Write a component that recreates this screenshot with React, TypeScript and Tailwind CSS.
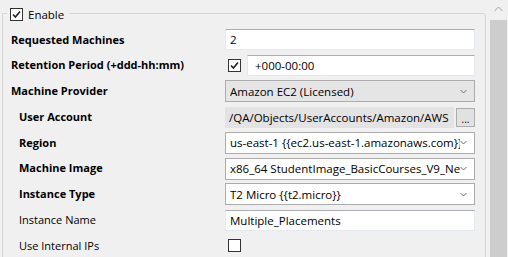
import type { ReactNode } from 'react'

// Windows-forms style property panel: "Enable" group box with labelled rows.

function Check({ checked }: { checked: boolean }) {
  return (
    <span className="flex h-[13px] w-[13px] items-center justify-center border border-[#333] bg-white">
      {checked && (
        <svg width="9" height="9" viewBox="0 0 9 9">
          <path d="M1 4.5 L3.4 7 L8 1.5" fill="none" stroke="#222" strokeWidth="1.6" />
        </svg>
      )}
    </span>
  )
}

function Chevron() {
  return (
    <svg width="7" height="5" viewBox="0 0 7 5" className="shrink-0">
      <path d="M0.5 1 L3.5 4 L6.5 1" fill="none" stroke="#707070" strokeWidth="1" />
    </svg>
  )
}

function TextBox({ value, className = '' }: { value: string; className?: string }) {
  return (
    <div className={`flex h-[21px] items-center overflow-hidden whitespace-nowrap border border-[#e3e9ef] border-t-[#abadb3] bg-white pl-[4px] text-[11.5px] ${className}`}>
      {value}
    </div>
  )
}

function Combo({ value, gray = false }: { value: string; gray?: boolean }) {
  return (
    <div className={`flex h-[22px] w-[250px] items-center border border-[#acacac] pl-[4px] pr-[7px] text-[11.5px] ${gray ? 'bg-[#e5e5e5]' : 'bg-white'}`}>
      <span className="flex-1 overflow-hidden whitespace-nowrap pr-[3px]">{value}</span>
      <Chevron />
    </div>
  )
}

function Row({ label, bold = true, indent = false, children }: { label: string; bold?: boolean; indent?: boolean; children: ReactNode }) {
  return (
    <div className="flex h-[25.75px] items-center">
      <div className={`w-[222px] ${indent ? 'pl-[16px]' : 'pl-[8px]'} ${bold ? 'font-bold' : ''}`}>{label}</div>
      {children}
    </div>
  )
}

export default function App() {
  return (
    <div className="flex h-[257px] w-[508px] overflow-hidden bg-[#f0f0f0] text-[11px] text-black [font-family:'Open_Sans',sans-serif]">
      <div className="w-[488px] pl-[2px] pr-[2px] pt-[13px]">
        <div className="relative h-[260px] w-[484px] rounded-tr-[3px] border border-[#d5d5d5] pt-[13px]">
          <div className="absolute left-[4px] top-[-8px] flex items-center gap-[5px] bg-[#f0f0f0] pl-[3px] pr-[5px] text-[11.5px]">
            <Check checked />
            <span>Enable</span>
          </div>
          <Row label="Requested Machines">
            <TextBox value="2" className="w-[250px]" />
          </Row>
          <Row label="Retention Period (+ddd-hh:mm)">
            <div className="flex items-center gap-[6px] pl-[3px]">
              <Check checked />
              <TextBox value="+000-00:00" className="w-[228px] pl-[7px]" />
            </div>
          </Row>
          <Row label="Machine Provider">
            <Combo value="Amazon EC2 (Licensed)" gray />
          </Row>
          <Row label="User Account" indent>
            <div className="flex w-[250px] items-center gap-[2px]">
              <div className="flex h-[21px] flex-1 items-center overflow-hidden whitespace-nowrap bg-[#e3e3e3] pl-[4px] text-[11.5px]">
                /QA/Objects/UserAccounts/Amazon/AWS
              </div>
              <div className="flex h-[19px] w-[19px] items-end justify-center border border-[#adadad] bg-[#e1e1e1] pb-[2px] text-[10px] leading-none">
                ...
              </div>
            </div>
          </Row>
          <Row label="Region" indent>
            <Combo value="us-east-1 {{ec2.us-east-1.amazonaws.com}}" />
          </Row>
          <Row label="Machine Image" indent>
            <Combo value="x86_64 StudentImage_BasicCourses_V9_New" />
          </Row>
          <Row label="Instance Type" indent>
            <Combo value="T2 Micro {{t2.micro}}" />
          </Row>
          <Row label="Instance Name" indent bold={false}>
            <TextBox value="Multiple_Placements" className="w-[250px]" />
          </Row>
          <Row label="Use Internal IPs" indent bold={false}>
            <div className="pl-[3px]">
              <Check checked={false} />
            </div>
          </Row>
        </div>
      </div>
      <div className="flex w-[20px] flex-col items-center bg-[#f0f0f0]">
        <div className="flex h-[18px] items-center justify-center">
          <svg width="9" height="6" viewBox="0 0 9 6">
            <path d="M0.5 5 L4.5 1 L8.5 5" fill="none" stroke="#a0a0a0" strokeWidth="1" />
          </svg>
        </div>
        <div className="mt-[2px] w-[17px] flex-1 bg-[#cdcdcd]" />
      </div>
    </div>
  )
}
